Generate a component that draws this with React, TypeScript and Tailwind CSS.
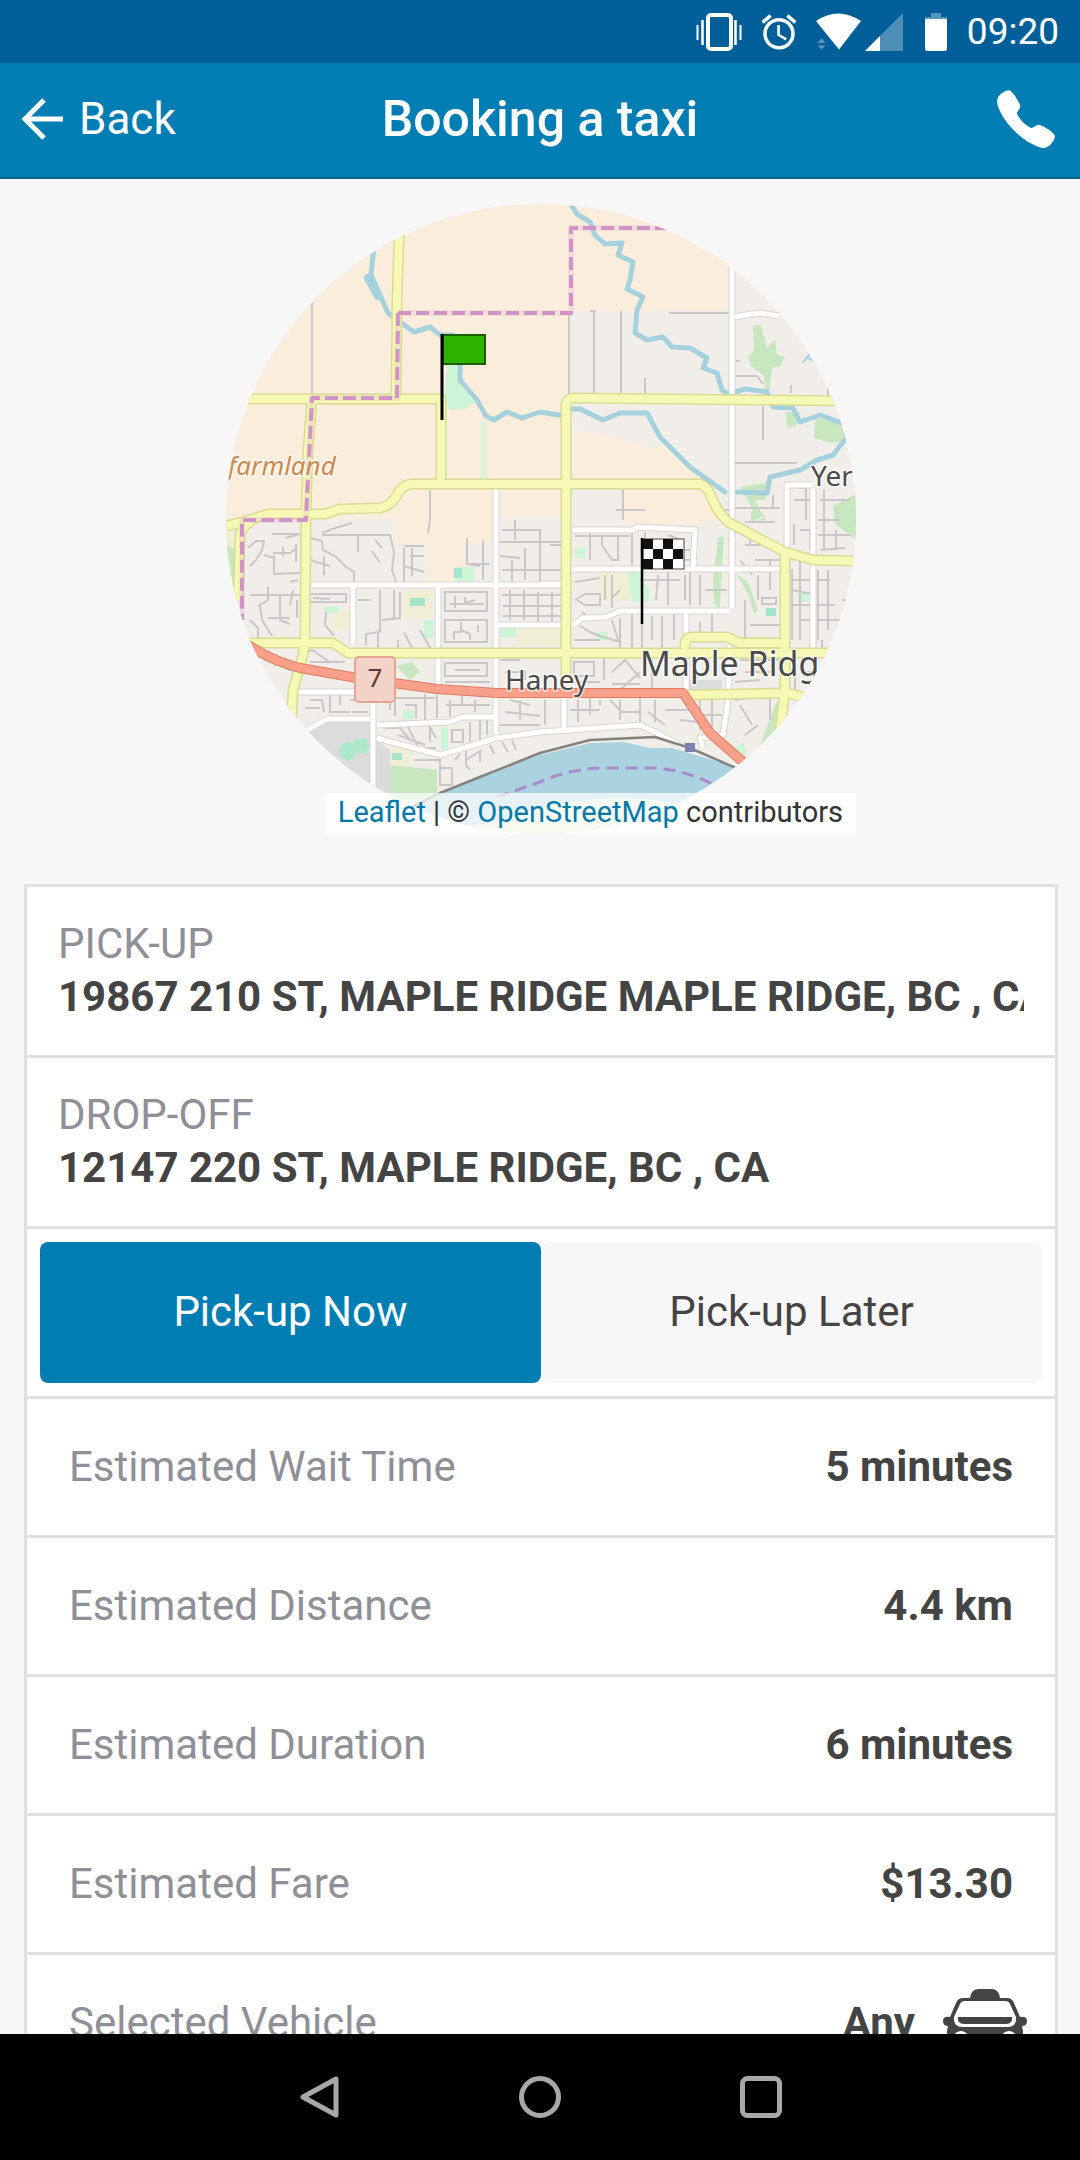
import { useState } from 'react';
import { IoCall } from 'react-icons/io5';
import { MdAlarm } from 'react-icons/md';

const ESTIMATES = [
  { label: 'Estimated Wait Time', value: '5 minutes' },
  { label: 'Estimated Distance', value: '4.4 km' },
  { label: 'Estimated Duration', value: '6 minutes' },
  { label: 'Estimated Fare', value: '$13.30' },
];

const ADDRESSES = [
  {
    id: 'pickup',
    label: 'PICK-UP',
    value: '19867 210 ST, MAPLE RIDGE MAPLE RIDGE, BC , CA',
  },
  {
    id: 'dropoff',
    label: 'DROP-OFF',
    value: '12147 220 ST, MAPLE RIDGE, BC , CA',
  },
];

const FARMLAND = [
  'M226 204H571V420L569 478V516H503V486H492V543H465V582H427V543H395V519H226Z',
  'M571 204H640L647 260L658 311H571Z',
  'M645 204H733V310H659L647 250Z',
  'M573 428L600 434L655 448L672 445L700 478H573Z',
  'M623 488H702L716 518L700 524H623Z',
];

const PARKS = [
  'M753 325H761L767 348L775 339L777 354L785 357L780 366L772 368L769 392H765L764 376L751 366L748 357L754 350Z',
  'M785 412H800L797 425L788 428Z',
  'M815 418L850 422L852 440L830 443L814 438Z',
  'M740 487L766 483L771 488L765 500H755L766 520L750 522L752 508Z',
  'M833 506L856 494V540L835 524Z',
  'M226 545L238 550L236 600L226 590Z',
  'M390 765L437 770V800H390Z',
  'M396 666L412 662L420 672L410 680Z',
  'M775 705L786 690V735L760 745Z',
  'M718 538L724 536L722 570L720 608L714 604L713 578Z',
  'M736 574L748 582L758 610L754 614L748 594Z',
  'M760 520L768 514L752 522Z',
];

const MINT_PARKS = [
  'M455 567H474V582H455Z',
  'M324 607L339 606V612L325 614Z',
  'M424 620H433V638H424Z',
  'M500 628H516V637H500Z',
  'M441 727H448V750H441Z',
  'M403 710H414V719H403Z',
  'M575 548H585V558H575Z',
  'M628 570L636 569L650 590L648 602L632 603Z',
  'M798 592H808V602H798Z',
  'M596 632H608V640H596Z',
  'M736 748L744 742L746 756L738 760Z',
  'M450 342L456 365L462 388L476 402L464 409L450 410L444 400L447 370Z',
];

const PITCHES = ['M410 598H425V606H410Z', 'M766 608H776V616H766Z', 'M454 568H462V578H454Z', 'M392 753H402V760H392Z'];

const SAND = [
  'M403 590H433V618H403Z',
  'M335 610H350V630H330Z',
  'M595 570H632V600H600Z',
  'M515 628H563V645H515Z',
  'M388 748H412V764H390Z',
  'M226 520L250 515L240 560L238 580L226 560Z',
];

// residential streets, drawn thin and grey
const STREETS = [
  'M312 298V396M430 490V520L428 533M569 313V395M594 311V393M621 311V393M645 378V393M669 313H730M734 272V310M590 311H596',
  'M736 361H740M736 376H757L763 384M791 385V393M828 385V400M763 406V440M735 463H797M623 490V520M616 510H645M735 508H780M773 495V508M720 510H730M797 488H806V520M794 500H810',
  'M248 548L256 541H264L262 550L256 560L250 566M264 555L274 558M273 553H290L297 548M274 555V574L300 573M283 547V556M272 534H300M296 544V562M285 538L300 534M290 582L298 580',
  'M310 538L322 541L323 550L335 556L345 566L354 572V583M322 533L335 528L352 523M322 535H390L394 552L392 570L396 582M358 535V552M375 540L382 548M372 551L380 563M310 560L330 566M324 556V575',
  'M404 546H424M404 548V582M410 556H424M404 566L424 572M412 548V576M467 538V564H490M483 540V580M467 564L480 566',
  'M268 587V600L258 606M250 595H300M260 605L262 620L272 636M280 595V620L290 624M297 600V618M268 618H290M250 620L258 628V640M293 590L290 605',
  'M310 594H346V602H310M313 598L330 599M326 612L325 625L334 636M358 600H370M380 590V632L366 634V645M400 592V618L382 620M394 590V620M378 630V648M398 640V650M404 632L412 648M420 630L430 648',
  'M445 592H487V611H445ZM455 596V608M465 597V603L475 600M445 620H487V642H445ZM461 622V632H454V640M461 630L470 634V640M478 625V632M450 604H484',
  'M502 530H540V560M515 520V540M500 542H563M525 548V580M500 556L520 558M540 538V582M550 545H563M502 570H563M512 560V582',
  'M502 595H563M510 590V620M524 590V620M538 592V622M552 592V622M503 606H563M503 616H563',
  'M575 536H630M590 530V560M602 535V545L612 560H618V535M632 532V566M645 532V566M655 540V566M668 545V560M640 550H690M668 535L680 540V566M690 560L650 556',
  'M575 582L600 578M575 600L585 594H600V605H585L577 600M605 575V600M612 575V608M658 575L656 600M668 572V605M685 575V600M640 580H680M690 572V605M620 590L612 598M700 575V605M705 590H727',
  'M574 640H600M580 626L590 632L600 636M612 620L618 640M620 618V648M632 615V648M642 615V650M652 616V640M662 616V648M674 614V640M600 636L620 642M582 612L590 618',
  'M574 662H594V676H574ZM604 658V680M612 672L625 660L640 678M652 658V690M612 684H640M620 690L640 672M575 682H600',
  'M700 622V640M712 615V636M740 560L752 575M745 600V640M758 575V600M762 598H776V604H762ZM770 560V590M782 570V600M750 625H782M755 560H782M745 545H770M792 570V640M800 560V640M792 580H830M792 605H835M818 570V640M828 570V630M800 620H840M792 590L812 594M820 550L845 548',
  'M738 530L728 540M745 522H775M750 535V545M794 524V545M800 530H810V550M820 500H850M818 520H840M818 535H850M836 530V550M824 490V550M842 600H856M822 640V648',
  'M310 700H322L324 712M330 695V712H350M340 695V705M305 708H320M350 700H370M352 712H368M300 654L312 650L330 662M310 662H345',
  'M380 700H395V716M390 690V710M405 705H416V718M425 694V722M437 695V718M395 698H435M450 700V717M446 705H490M462 690V705M475 700V712M445 663H487V676H445ZM455 670H480M445 682H490',
  'M385 728H400L410 740M398 735L425 745M408 727L418 747M430 724V742M452 730H463V742H452ZM470 722V742M480 720V740M487 720V735M420 748H436M428 724L436 738',
  'M414 760H440V770M440 768H452V785H440ZM466 750V765L470 770M480 750V762M490 745L494 754M502 742L508 752M512 740L516 750M466 760L482 750M455 760L460 754',
  'M578 700V722M590 698V715M600 700V705M610 700L622 712H640M620 700V720M640 698V722M655 700V722M665 710H690M570 710H600M648 712L665 725M680 720L698 722M700 700V730M712 700V730M692 715H722',
  'M735 700L760 695M740 705L752 725M770 695V720M745 735L758 725M795 660V690M800 672H830M740 660H780M745 672H770M735 682L760 680',
  'M500 660H520M505 672H525V680M510 700L530 705M505 712L540 716M545 700V725M520 700V720M500 725H540',
];

const WHITE_ROADS = [
  'M309 585H563M353 586V645M438 587V690M496 487V735M572 530H633L637 527L695 530L693 568M570 569H785M540 584H563M498 625H573L583 618L607 617L620 611H730',
  'M732 205V320M732 317L760 313L779 316M732 315V608M813 488V650M787 550V485H813M686 611V690M730 645L728 700L723 735L700 738L703 748',
  'M297 692H357M307 730L327 719H370M373 700V800M377 725L450 722L462 717H495M377 738L440 755L497 738L540 732L640 725L655 732L683 747M564 695V728',
];

const YELLOW_ROADS = [
  'M400 204L397 300L396 399M226 399H441V482M312 399L308 450L306 515L305 640L303 655L293 690L291 730',
  'M226 526L250 520L268 514H325L340 509L380 508Q390 506 396 497Q402 484 412 484H700Q708 487 711 496Q717 512 728 522L785 552L813 560L856 561',
  'M252 521Q240 526 240 540L238 600M566 680V406Q566 398 574 398L856 401',
  'M240 643H333L348 653H856M685 653V642Q686 637 694 637H727L740 643H785M785 552V690L780 730M688 695L787 693L815 700',
];

const STREAMS = [
  'M374 245L371 275L388 313L400 322L414 332L430 327L440 335L453 335L460 350V380L477 400L486 416L494 420L507 412L522 418L540 412L565 416',
  'M571 409L580 409L603 420L620 413L647 413L660 437L690 467L725 492',
  'M572 206L577 214L590 222L595 235L605 244L622 243L618 255L633 262L630 280L627 289L643 297L637 310L635 333L647 340L663 337L672 347L690 348L707 358L703 368L717 373L722 390L728 394L745 389L767 392L773 407L793 408L800 422L820 415L845 424',
  'M737 492L767 493L770 477L800 470L817 460L833 455L846 438L856 430',
];

const HIGHWAY = 'M240 640L253 648Q275 662 300 668L357 678L437 689L497 693H683L710 733L750 768';

const BOUNDARY = 'M398 313H571V228H700M398 313L397 398H312L306 520H242V620';

const CHECKERS = [0, 1, 2].flatMap((row) =>
  [0, 1, 2, 3]
    .filter((col) => (row + col) % 2 === 0)
    .map((col) => ({ x: 643 + col * 10, y: 539 + row * 10 }))
);

function RouteMap() {
  return (
    <svg
      viewBox="226 204 630 630"
      className="block size-full rounded-full font-['Noto_Sans',sans-serif]"
      role="img"
      aria-label="Route from pick-up to drop-off"
    >
      <rect x="226" y="204" width="630" height="630" fill="#f1eee9" />
      <path d={FARMLAND.join('')} fill="#fbeddb" />
      <path d={SAND.join('')} fill="#f1eed6" />
      <path d="M300 735L327 721H371V800L340 790ZM376 740L390 750V800L376 790ZM685 680H722V690H685Z" fill="#dddcdc" />
      <path d={PARKS.join('')} fill="#c8e6bf" />
      <path d={MINT_PARKS.join('')} fill="#cbf5d6" />
      <path d={PITCHES.join('')} fill="#a6e3cb" />
      <g fill="#aee8cb">
        <circle cx="348" cy="751" r="9" />
        <circle cx="361" cy="746" r="8" />
      </g>
      <path d="M484 421V478" fill="none" stroke="#dcf4dc" strokeWidth="6" />
      <path d={STREETS.join('')} fill="none" stroke="#cbc7c8" strokeWidth="2" />
      <path
        d="M405 810L480 775L540 755L590 743L623 742L650 748L672 748L740 768L760 834H405Z"
        fill="#aad3df"
      />
      <path d="M500 820Q600 785 690 806L720 834H440Z" fill="#e4edcd" />
      <g fill="none" stroke="#a5d1dd" strokeWidth="5" strokeLinejoin="round" strokeLinecap="round">
        <path d={STREAMS.join('')} />
        <path d="M368 278L378 296" strokeWidth="8" />
        <path d="M803 362L810 354M808 358L812 360" strokeWidth="2" />
      </g>
      <g fill="none" strokeLinejoin="round">
        <path d={WHITE_ROADS.join('')} stroke="#d9d5d3" strokeWidth="7" />
        <path d={WHITE_ROADS.join('')} stroke="#fff" strokeWidth="5" />
        <path d={YELLOW_ROADS.join('')} stroke="#d8dc92" strokeWidth="11" />
        <path d={YELLOW_ROADS.join('')} stroke="#f6f8b5" strokeWidth="8" />
        <path d={HIGHWAY} stroke="#de7c62" strokeWidth="10" />
        <path d={HIGHWAY} stroke="#f8a08a" strokeWidth="8" />
        <path d="M410 808L440 793L540 753L590 740L655 737L690 748L745 772" stroke="#85827f" strokeWidth="2.5" />
        <path d={BOUNDARY} stroke="#d9a0d2" strokeOpacity="0.2" strokeWidth="6" />
        <path d={BOUNDARY} stroke="#d193c6" strokeWidth="4" strokeDasharray="13 5" />
        <path
          d="M497 797L540 782Q570 769 600 768L657 768Q690 771 720 788"
          stroke="#a78cc9"
          strokeWidth="3"
          strokeDasharray="12 7"
        />
      </g>
      <rect x="685" y="743" width="10" height="9" fill="#7a82b5" />

      <g stroke="#fff" strokeOpacity="0.7" strokeWidth="3" strokeLinejoin="round" paintOrder="stroke" fill="#4a4a4a">
        <text x="228" y="475" fontSize="26" fontStyle="italic" fill="#c98a50">
          farmland
        </text>
        <text x="811" y="486" fontSize="28">
          Yer
        </text>
        <text x="505" y="690" fontSize="28">
          Haney
        </text>
        <text x="640" y="676" fontSize="34">
          Maple Ridg
        </text>
      </g>
      <rect x="355" y="657" width="40" height="45" rx="4" fill="#f3d3c8" stroke="#e2a594" strokeWidth="2" />
      <text x="375" y="687" fontSize="26" textAnchor="middle" fill="#5d3a35">
        7
      </text>

      <rect x="443" y="335" width="42" height="29" fill="#2db200" stroke="#1b6000" strokeWidth="2" />
      <path d="M442 334V420" stroke="#000" strokeWidth="3" />
      <rect x="643" y="539" width="41" height="30" fill="#fff" stroke="#444" />
      {CHECKERS.map((cell) => (
        <rect key={`${cell.x}-${cell.y}`} x={cell.x} y={cell.y} width="10" height="10" fill="#111" />
      ))}
      <path d="M642 538V624" stroke="#000" strokeWidth="2.5" />
    </svg>
  );
}

function StatusBar() {
  return (
    <div className="flex h-[63px] shrink-0 items-center justify-end bg-[#005f99] pr-[21px] text-white">
      <svg viewBox="0 0 46 38" className="mr-[16px] h-[38px] w-[46px]" fill="none" stroke="currentColor">
        <rect x="12" y="2" width="23" height="34" rx="3" strokeWidth="4" />
        <path d="M6.500 7V32M39.500 7V32" strokeWidth="2.500" />
        <path d="M1.500 12V27M44.500 12V27" strokeWidth="2" />
      </svg>
      <MdAlarm className="mr-[15px] size-[42px]" />
      <svg viewBox="0 0 46 37" className="mr-[4px] h-[37px] w-[46px]" fill="currentColor">
        <path d="M1 8Q23-7 46 8L24 36.500Z" />
        <path d="M2.500 30L6.500 25L10.500 30ZM2.500 32.500H10.500L6.500 36.500Z" opacity="0.35" />
      </svg>
      <svg viewBox="0 0 38 38" className="mr-[22px] size-[38px]" fill="currentColor">
        <path d="M0 38L38 0V38Z" opacity="0.3" />
        <path d="M0 38L15 23V38Z" />
      </svg>
      <svg viewBox="0 0 22 38" className="mr-[20px] h-[38px] w-[22px]" fill="currentColor">
        <path d="M6 0H16V4H22V7H0V4H6Z" opacity="0.35" />
        <path d="M0 6H22V36Q22 38 20 38H2Q0 38 0 36Z" />
      </svg>
      <span className="text-[37px] leading-none">09:20</span>
    </div>
  );
}

function TaxiIcon() {
  return (
    <svg viewBox="0 0 84 68" className="h-[68px] w-[84px]" fill="#444">
      <path d="M27 9Q28 0 36 0H48Q56 0 57 9H64Q69 9 71 14L77 28Q84 27 84 32Q84 37 79 37L80 42V66H68V58H16V66H4V42L5 37Q0 37 0 32Q0 27 7 28L13 14Q15 9 20 9Z" />
      <path d="M22 12H62Q66 12 67 15L73 28Q74 38 64 38H20Q10 38 11 28L17 15Q18 12 22 12Z" fill="#fff" />
      <path d="M15 28H69Q70 35 63 35H21Q14 35 15 28Z" />
      <ellipse cx="18" cy="48" rx="7" ry="6" fill="#fff" />
      <ellipse cx="66" cy="48" rx="7" ry="6" fill="#fff" />
    </svg>
  );
}

export default function App() {
  const [later, setLater] = useState(false);
  const active = 'bg-[#007db3] text-white';
  const idle = 'bg-[#f7f7f7] text-[#444]';

  return (
    <div className="flex h-screen flex-col overflow-hidden bg-[#f7f7f7] font-[Roboto,sans-serif] text-[42px] leading-[53px] text-[#444]">
      <StatusBar />
      <header className="grid h-[116px] shrink-0 grid-cols-[1fr_auto_1fr] items-center border-b-2 border-[#0a6389] bg-[#007db3] px-[21px] pb-[2px] text-white">
        <button className="flex items-center gap-[16px] justify-self-start text-[44px]">
          <svg
            viewBox="0 0 42 42"
            className="size-[42px]"
            fill="none"
            stroke="currentColor"
            strokeWidth="5"
          >
            <path d="M23 2L4 21L23 40M3 21H42" />
          </svg>
          Back
        </button>
        <h1 className="text-[50px] font-medium">Booking a taxi</h1>
        <button className="justify-self-end" aria-label="Call">
          <IoCall className="size-[66px]" />
        </button>
      </header>

      <main className="min-h-0 flex-1 overflow-hidden pr-[22px] pl-[24px]">
        <div className="relative mx-auto mt-[25px] aspect-square w-[630px] max-w-full">
          <RouteMap />
          <div className="absolute right-0 bottom-0 bg-white/70 px-[13px] pb-[2px] text-[29px] leading-[39px] whitespace-nowrap text-[#333]">
            <a href="#leaflet" className="text-[#0078a8]">
              Leaflet
            </a>{' '}
            | ©{' '}
            <a href="#osm" className="text-[#0078a8]">
              OpenStreetMap
            </a>{' '}
            contributors
          </div>
        </div>

        <div className="mt-[50px] border-3 border-[#e0e0e0] bg-white">
          {ADDRESSES.map((address) => (
            <div
              key={address.id}
              className="flex h-[171px] flex-col justify-center border-b-3 border-[#e0e0e0] px-[31px] pb-[2px]"
            >
              <label htmlFor={address.id} className="text-[#8f8f97]">
                {address.label}
              </label>
              <input
                id={address.id}
                readOnly
                defaultValue={address.value}
                className="h-[53px] w-full font-bold outline-none"
              />
            </div>
          ))}

          <div className="flex h-[170px] border-b-3 border-[#e0e0e0] p-[13px]">
            <button
              onClick={() => setLater(false)}
              className={`flex-1 rounded-lg pb-[2px] ${later ? idle : active}`}
            >
              Pick-up Now
            </button>
            <button
              onClick={() => setLater(true)}
              className={`flex-1 rounded-lg pb-[2px] ${later ? active : idle}`}
            >
              Pick-up Later
            </button>
          </div>

          {ESTIMATES.map((row) => (
            <div
              key={row.label}
              className="flex h-[139px] items-center justify-between border-b-3 border-[#e0e0e0] px-[42px] pb-[2px]"
            >
              <span className="text-[#8f8f97]">{row.label}</span>
              <span className="font-bold">{row.value}</span>
            </div>
          ))}

          <div className="flex h-[139px] items-center justify-between pr-[28px] pb-[4px] pl-[42px]">
            <span className="text-[#8f8f97]">Selected Vehicle</span>
            <span className="flex items-center gap-[28px] font-bold">
              Any
              <TaxiIcon />
            </span>
          </div>
        </div>
      </main>

      <nav className="flex h-[126px] shrink-0 items-center justify-center gap-[179px] bg-black text-[#a8a8a8]">
        <button aria-label="Back">
          <svg viewBox="0 0 42 42" className="size-[42px]" fill="none" stroke="currentColor" strokeWidth="5" strokeLinejoin="round">
            <path d="M38 3V39L5 21Z" />
          </svg>
        </button>
        <button aria-label="Home">
          <svg viewBox="0 0 42 42" className="size-[42px]" fill="none" stroke="currentColor" strokeWidth="5">
            <circle cx="21" cy="21" r="18.500" />
          </svg>
        </button>
        <button aria-label="Recent apps">
          <svg viewBox="0 0 42 42" className="size-[42px]" fill="none" stroke="currentColor" strokeWidth="5">
            <rect x="2.500" y="2.500" width="37" height="37" rx="5" />
          </svg>
        </button>
      </nav>
    </div>
  );
}
